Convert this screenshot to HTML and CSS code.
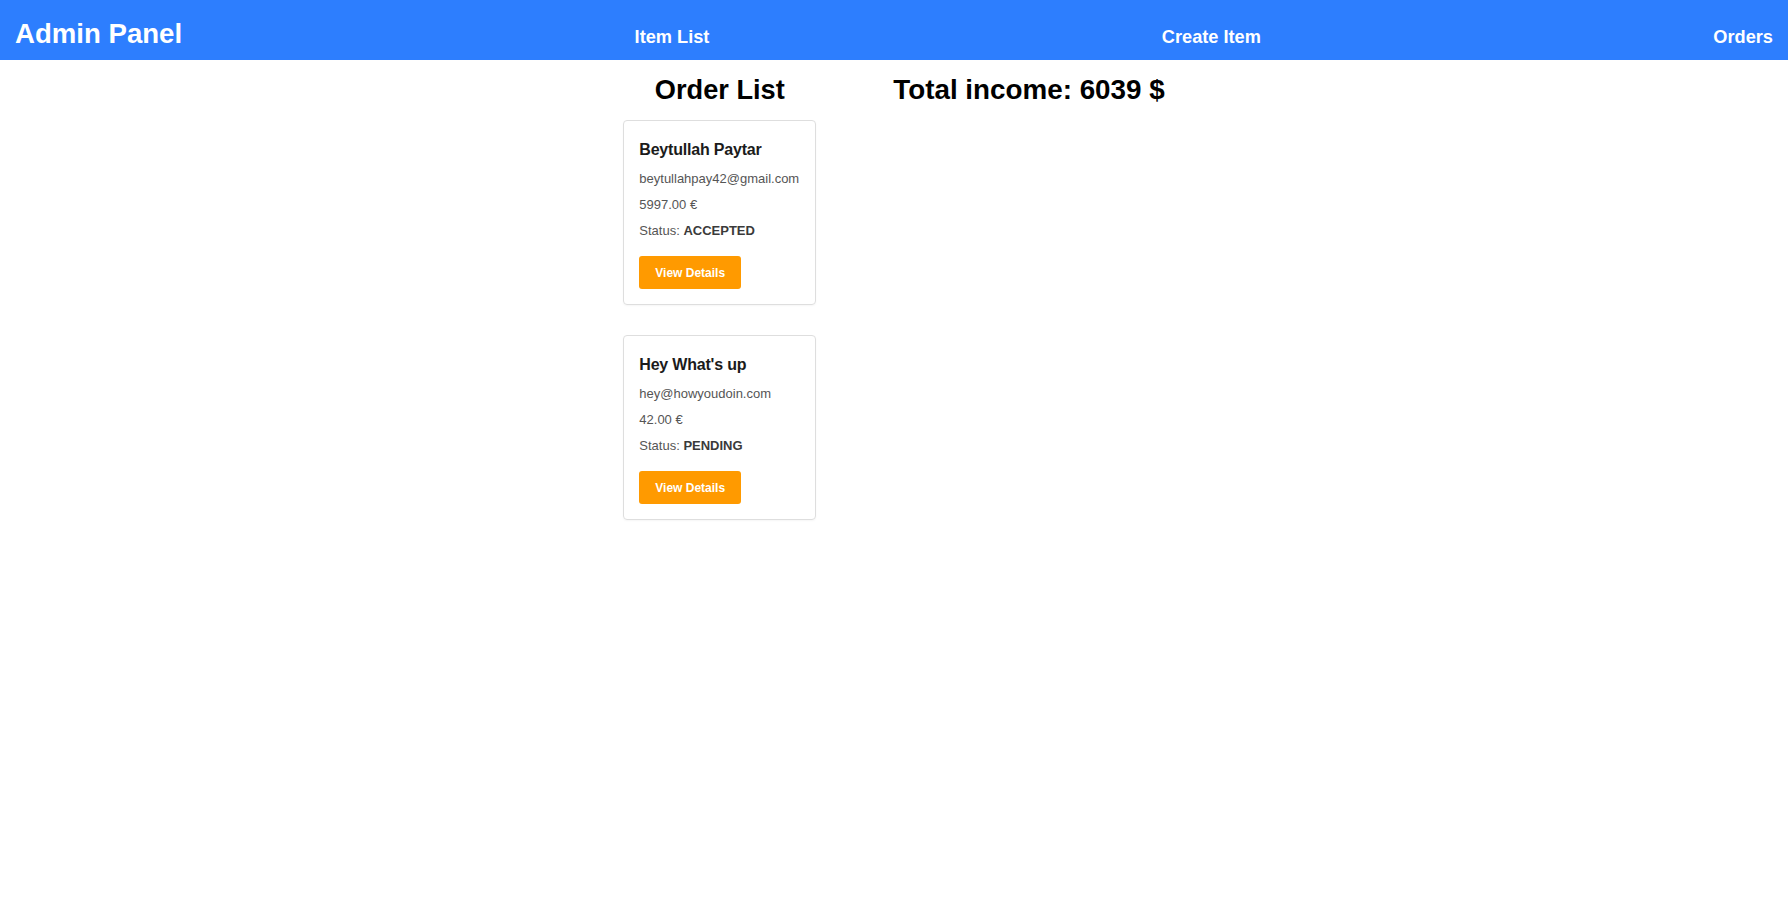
FILE: index.html
```html
<!DOCTYPE html>
<html lang="en">
<head>
<meta charset="utf-8">
<title>Admin Panel - Orders</title>
<link rel="stylesheet" href="styles.css">
</head>
<body>
<nav class="navbar">
  <span class="brand">Admin Panel</span>
  <a class="nav-link" href="#">Item List</a>
  <a class="nav-link" href="#">Create Item</a>
  <a class="nav-link" href="#">Orders</a>
</nav>
<main class="page">
  <section class="orders">
    <h2 class="title">Order List</h2>
    <div class="order-card">
      <h3 class="order-name">Beytullah Paytar</h3>
      <p class="order-line first">beytullahpay42@gmail.com</p>
      <p class="order-line">5997.00 €</p>
      <p class="order-line">Status: <strong class="status">ACCEPTED</strong></p>
      <button class="details-btn">View Details</button>
    </div>
    <div class="order-card">
      <h3 class="order-name">Hey What's up</h3>
      <p class="order-line first">hey@howyoudoin.com</p>
      <p class="order-line">42.00 €</p>
      <p class="order-line">Status: <strong class="status">PENDING</strong></p>
      <button class="details-btn">View Details</button>
    </div>
  </section>
  <h2 class="title income">Total income: 6039 $</h2>
</main>
</body>
</html>
```
FILE: styles.css
```css
* { box-sizing: border-box; }
body {
  margin: 0;
  font-family: "Liberation Sans", Arial, sans-serif;
  background: #ffffff;
  color: #000;
}
.navbar {
  height: 60px;
  background: #2d7efe;
  display: flex;
  justify-content: space-between;
  align-items: baseline;
  padding: 18px 15px 0;
}
.brand {
  color: #fff;
  font-size: 27.6px;
  line-height: 32px;
  font-weight: 700;
}
.nav-link {
  color: #fff;
  font-size: 18.2px;
  line-height: 22px;
  font-weight: 700;
  text-decoration: none;
}
.page {
  display: flex;
  justify-content: center;
  align-items: flex-start;
  gap: 77px;
  padding-top: 14px;
}
.orders {
  width: 193px;
  display: flex;
  flex-direction: column;
  align-items: center;
}
.title {
  margin: 0;
  font-size: 27.2px;
  line-height: 32px;
  font-weight: 700;
  color: #000;
}
.income { font-size: 27.8px; }
.orders .title { margin-bottom: 14px; }
.order-card {
  width: 193px;
  border: 1px solid #dedede;
  border-radius: 4px;
  padding: 18px 15px 15px 15px;
  margin-bottom: 30px;
  box-shadow: 0 1px 2px rgba(0,0,0,0.04);
  display: flex;
  flex-direction: column;
  align-items: flex-start;
}
.order-name {
  margin: 0;
  font-size: 16px;
  line-height: 22px;
  font-weight: 700;
  color: #1b1b1b;
  letter-spacing: -0.2px;
}
.order-line {
  margin: 8px 0 0;
  font-size: 13px;
  line-height: 18px;
  color: #555;
}
.order-line.first { margin-top: 9px; }
.status {
  font-weight: 700;
  color: #3a3a3a;
}
.details-btn {
  margin-top: 16px;
  height: 33px;
  padding: 0 16px;
  border: none;
  border-radius: 3px;
  background: #ff9a00;
  color: #fff;
  font-family: "Liberation Sans", Arial, sans-serif;
  font-size: 12px;
  font-weight: 700;
  cursor: pointer;
}
```
